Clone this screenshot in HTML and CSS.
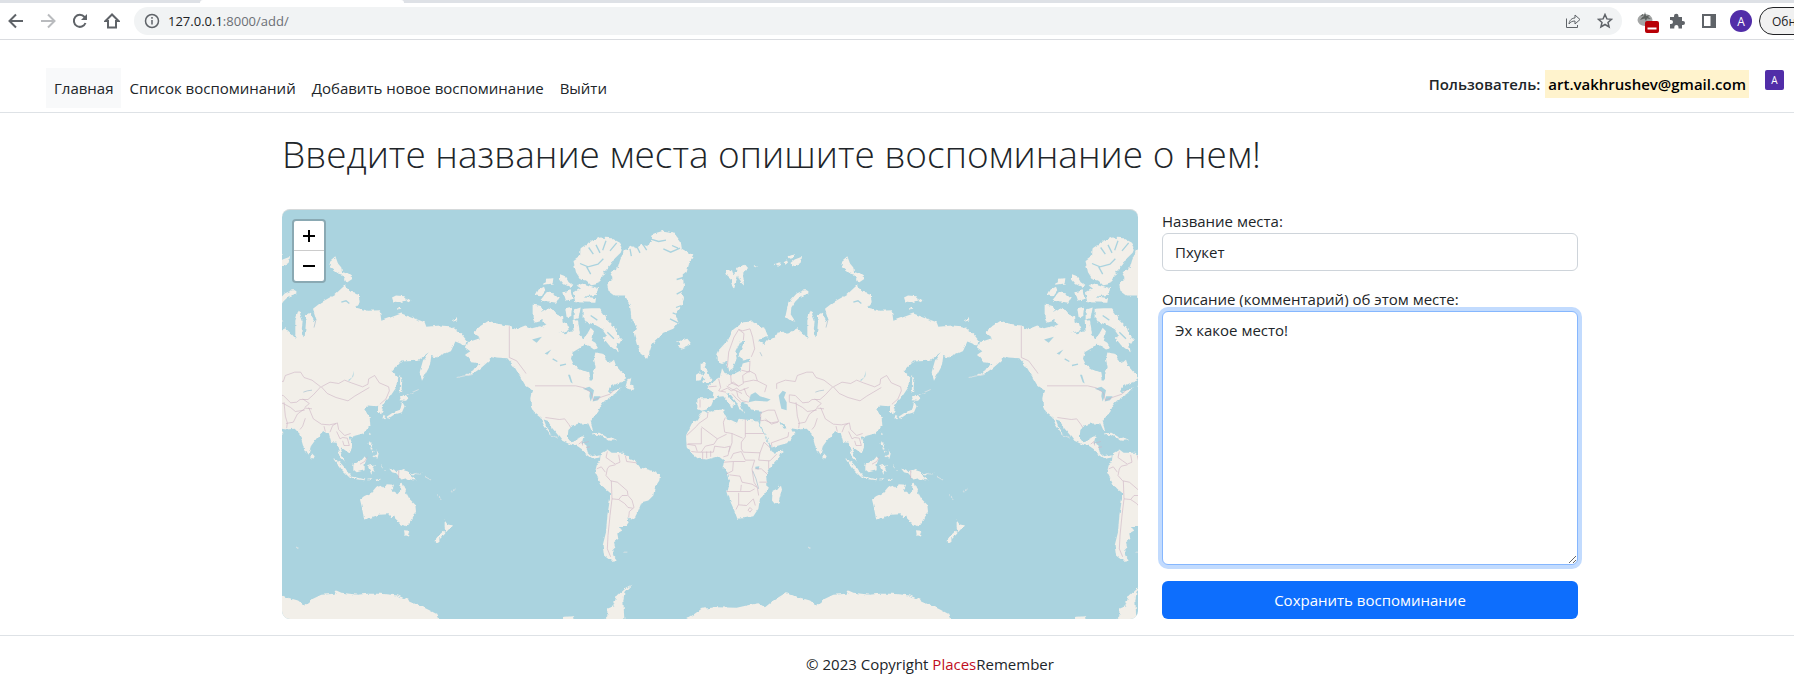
FILE: index.html
```html
<!DOCTYPE html>
<html lang="ru">
<head>
<meta charset="utf-8">
<title>PlacesRemember</title>
<link rel="stylesheet" href="styles.css">
</head>
<body>
<div class="browser">
  <div class="tabs"><div class="tab"></div></div>
  <div class="toolbar">
    <button class="tool" aria-label="Назад"><svg viewBox="0 0 16 16"><path d="M15 8H2M8 1.500 1.500 8 8 14.500"/></svg></button>
    <button class="tool tool-off" aria-label="Вперёд"><svg viewBox="0 0 16 16"><path d="M1 8h13M8 1.500 14.500 8 8 14.500"/></svg></button>
    <button class="tool" aria-label="Обновить"><svg viewBox="0 0 16 16"><path d="M13.500 10A6 6 0 1 1 12.500 4L14 5.500"/><path class="solid" d="M15 1v6H9z"/></svg></button>
    <button class="tool" aria-label="Домой"><svg viewBox="0 0 16 16"><path d="M8 1.500 1.500 8H4v6.500h8V8h2.500z"/></svg></button>
    <div class="omnibox">
      <svg class="info" viewBox="0 0 16 16"><circle cx="8" cy="8" r="6.500"/><path d="M8 7v4.500M8 4v1.700"/></svg>
      <span class="url">127.0.0.1<span class="path">:8000/add/</span></span>
      <button class="tool thin" aria-label="Поделиться"><svg viewBox="0 0 16 16"><path d="M1.500 5.500v9h11V12M4 11c.5-4 3-6 6-6V2l5 4.500L10 11V8c-3 0-4.500 1-6 3z"/></svg></button>
      <button class="tool star" aria-label="В закладки"><svg viewBox="0 0 16 16"><path d="m8 1.500 1.900 4.400 4.600.4-3.500 3.100 1.100 4.600L8 11.500 3.900 14 5 9.400 1.500 6.300l4.600-.4z"/></svg></button>
    </div>
    <div class="extensions">
      <button class="tool" aria-label="Расширение"><svg class="tomato" viewBox="0 0 22 22"><ellipse cx="8" cy="8" rx="7.500" ry="6" fill="#a3a5a5"/><path d="M3 5c1-1 2.500-1.500 4-1.500L5.500 2M7 4l1-4 1 4 4-1-2 2 3 2-4-.5L9 9 7.500 6.500 3 8l2-2.500z" fill="#5c605e"/><rect x="8" y="9" width="14" height="12" rx="2" fill="#b80006"/><path d="M10.500 16.500h9" stroke="#fff"/></svg></button>
      <button class="tool" aria-label="Расширения"><svg viewBox="0 0 16 16"><path class="solid" d="M1 4h4V3a2 2 0 0 1 4.500 0v1H13v4h1a2 2 0 0 1 0 4h-1v3.500H9.500V14a2 2 0 0 0-4.200 0v1.500H1V11h1a2 2 0 0 0 0-4H1z"/></svg></button>
      <button class="tool" aria-label="Боковая панель"><svg viewBox="0 0 16 16"><path d="M2 2h12v12H2z"/><path class="solid" d="M9.500 2H14v12H9.500z"/></svg></button>
      <button class="profile">A</button>
    </div>
    <button class="update">Обн</button>
  </div>
</div>

<header class="site-header">
  <nav class="nav">
    <a class="active" href="#">Главная</a>
    <a href="#">Список воспоминаний</a>
    <a href="#">Добавить новое воспоминание</a>
    <a href="#">Выйти</a>
  </nav>
  <div class="user"><span>Пользователь:</span><mark>art.vakhrushev@gmail.com</mark><span class="avatar">A</span></div>
</header>

<main class="main">
  <div class="container">
    <h1>Введите название места опишите воспоминание о нем!</h1>
    <div class="row">
      <section class="map" aria-label="Карта">
        <svg class="world" viewBox="-714 12 2568 1230" preserveAspectRatio="xMidYMid slice">
          <defs>
            <filter id="coast" x="-5%" y="-5%" width="110%" height="110%"><feTurbulence type="fractalNoise" baseFrequency="0.07" numOctaves="2" seed="4" result="n"/><feDisplacementMap in="SourceGraphic" in2="n" scale="11" xChannelSelector="R" yChannelSelector="G"/></filter>
            <g id="world">
              <g class="land" filter="url(#coast)">
                <!-- North America -->
                <path d="M-150 408l30-10-22-16 22-20 26-16 24 8 38 7 20 10 28-11 20 8 24-6 26 10 24 7 26 4 20-8 20 6 14 18 12-14 10-18 10 10-4 20-8 25-16-4-16 10-20 12-5 20 10 20 20 12 22 8 4 25h10v-20l8-20-5-24 4-20 22 4 10 16 14 10 10-8 6 18 14 16 16 14-2 14-26 10-22 12-4 14 38-12-14 16-18 10-18 12-12 16-5 16-15 17-8 12 6 20-3 8-10-22h-24l-26 5-10 15-2 20 12 16 15-4 6-12 15-2-6 22 14 8 4 18 14 12 22-6 0 10-20 4-22-16-10-12-14-10-20-4-26-12-10-14-20-24-14-22-12-4 8 20 16 24-6-2-18-26-10-22-20-16-8-16-2-26 5-24-22-18-14-24-18-30-20-24-32-2-14-4-10 15-22 20-24 16-26 10 2-4 28-18 14-18-25-3-5-13-12-10 15-10-20-14z"/>
                <path d="M38 298l20 2 12 12-8 8 20-12 20 6 10 14 14 6 2 14 14 8 4 18-24 6-26 4-16-10-14-12 10-6-8-12-26 8-4-18zM46 270l10-18 16-8 4 10-14 18zM72 238l8-18 20-2-2 16zM60 286l20-26 20 4 16 14-8 14-20-4zM120 206l16 6 10 18 14 10-12 4-16-8-12-14zM130 260l22-6 6 26-20 6zM160 262l20-12 50 4 2 14-40 4 36 6-2 14-60-2zM170 240l20-6 44 14-2 12-40-4zM136 308l20-4-2 24-14 8zM164 312l18-6-6 32-12 4zM158 346l16-2 6 40-18 6zM188 310L215 308L240 308L256 330L262 345L285 368L292 390L305 402L298 415L290 412L296 440L284 432L268 420L252 400L258 388L244 368L222 356L200 352L188 335zM196 414l14-12 16 10 10 16-14 4z"/>
                <path d="M160 164L180 150L182 128L212 108L240 96L275 98L300 112L308 126L302 142L285 158L272 178L256 196L246 212L232 236L214 240L200 226L182 222L168 200z"/>
                <path d="M316 546l6-22 12-4-4 14 14 12-4 8zM216 684l22-2 24 14-8 2-20-10-18 2zM256 700l20-4 16 8-22 2z"/>
                <!-- Greenland and Iceland -->
                <path d="M262 236L280 215L272 200L294 186L300 165L312 135L335 122L350 128L365 118L385 122L400 85L430 76L460 80L482 108L485 130L500 138L520 150L508 172L500 200L488 210L492 240L485 258L492 280L485 300L465 325L475 350L460 370L430 382L405 405L395 420L382 460L362 445L350 415L342 385L350 360L335 345L330 300L315 270L285 270L265 255z"/>
                <path d="M468 404L482 406L502 400L512 412L502 424L486 430L474 424L478 414z"/>
                <!-- South America -->
                <path d="M242 744L262 732L275 742L310 742L325 757L345 765L360 785L395 795L420 808L418 825L405 845L400 870L385 885L365 890L355 915L345 935L330 942L322 935L326 950L318 962L300 965L305 977L292 985L295 1000L282 1010L286 1025L277 1035L280 1050L292 1064L272 1066L252 1050L248 1020L258 980L262 930L270 880L270 862L245 840L225 800L230 780L240 765z"/>
                <!-- Scandinavia, Europe and Asia -->
                <path d="M592 446L600 430L625 402L640 372L670 350L695 348L735 370L745 395L718 398L716 406L732 416L745 402L765 396L775 378L790 376L800 385L832 368L850 385L862 398L862 345L872 315L884 345L880 385L890 395L894 350L890 330L905 322L920 350L925 342L915 310L940 290L980 268L1010 240L1026 258L1052 265L1055 290L1042 306L1080 316L1116 314L1120 346L1180 324L1250 350L1255 364L1296 360L1330 362L1360 385L1376 405L1372 420L1342 408L1330 435L1284 456L1270 450L1266 480L1242 526L1235 500L1245 465L1262 440L1230 466L1180 468L1150 500L1168 512L1165 545L1145 575L1124 598L1104 602L1080 600L1068 610L1085 635L1087 660L1065 684L1035 692L1025 694L1034 720L1025 744L1000 726L996 736L1012 772L996 756L986 712L970 710L962 682L942 680L925 700L910 720L902 748L885 720L875 685L860 670L835 672L800 666L776 642L792 670L810 665L824 686L805 712L755 726L742 700L720 655L726 616L690 612L682 596L660 590L664 604L672 624L660 614L650 592L634 570L618 560L622 572L644 596L634 608L628 594L610 572L596 574L580 584L574 600L560 612L545 616L532 610L532 578L578 578L580 560L562 550L566 542L585 525L600 516L606 488L616 506L640 506L662 495L668 474L690 468L690 460L668 466L656 446L672 415L672 406L662 408L646 440L650 458L638 492L628 498L620 464L608 476L594 470z"/>
                <!-- Africa -->
                <path d="M548 616L558 622L580 614L613 612L614 628L620 640L650 655L656 640L680 643L715 645L722 665L740 700L752 735L762 742L788 735L780 755L752 785L738 810L743 845L740 860L720 880L715 910L700 932L670 938L652 940L645 920L632 890L622 858L630 825L622 800L608 785L612 765L595 752L560 762L535 760L515 745L500 725L498 690L515 655L530 645z"/>
                <path d="M782 838L786 852L776 890L764 895L756 885L758 856L772 850z"/>
                <!-- British Isles, Svalbard, Arctic islands -->
                <path d="M542 474L558 472L554 486L562 492L568 512L576 522L572 532L546 534L556 520L548 512L552 500L542 492zM528 508l12-8 8 8-6 16-14 2zM616 196l20-2 4 12 14-18 10 6 6 22 2 24-10-10-8-20-6 18-6 24-6-12-4-22-10-8zM652 186l24-8 10 12-20 14zM704 182l10 0-6 4zM764 176l14-6 6 8-10 6zM790 168l10-6 4 10-8 6zM802 154l20-8 0 10-10 4zM812 172l12-10 22-8-4 18-16 6-12 6zM852 254L862 254L862 264L842 272L826 288L814 306L812 326L826 348L812 346L796 334L802 306L814 282L830 264zM964 184l4-20 14-12 8 22 10 12 2 14 18 6 16 12-20 14-14-24-12-4-18-14zM1152 276l12-6 26 2 4 14-20 4-18-2zM1196 280l14 4-4 6-10-4zM1170 302l10 4-8 6zM1332 344l14-6 2 6-12 4z"/>
                <!-- Japan, Philippines, Indonesia -->
                <path d="M1177 508l6 14-2 24 2 12-8 4zM1176 576l12-8 16 10-14 8-12-2zM1182 588l8 14-8 18-24 8-18 12-4-6 20-14 22-8zM1126 628l8 4-2 10-6-4zM1110 600l8-4 6 16-4 14-10-4zM1084 678l4 8-4 8zM1084 704l6 6 0 16 8 8-10-4-6-14zM1096 752l12-6-2-12 6 10-4 16zM1094 736l6 2-4 4zM978 758l16 10 18 20 14 22-4 4-18-18zM1022 812l26 4 24 6-2 2-44-6zM1036 778l20-12 12-14 8 8-6 16 0 18-24 6-10-8zM1080 784l6-4 16-4-8 10 6 14-6-4-4 12-4-12zM1076 824l18-4-6 4zM1106 822l14-2-12 8zM1122 778l2 12-4-6zM1128 794l12 0-10 2zM1144 790L1158 792L1166 800L1180 792L1200 798L1208 812L1226 824L1214 824L1196 818L1180 822L1166 804L1152 800zM1208 808l18-6-10 8zM912 744l8 8-4 8-6-4z"/>
                <!-- Australia and New Zealand -->
                <path d="M1056 882L1068 872L1090 862L1104 845L1122 840L1130 848L1136 836L1158 838L1152 856L1168 866L1176 858L1178 834L1184 832L1192 856L1204 880L1222 898L1224 918L1212 944L1198 962L1180 958L1168 950L1158 932L1150 938L1142 926L1112 928L1090 936L1068 942L1064 915zM1188 974l16 2-4 14-10-4zM1310 944L1318 956L1332 960L1322 972L1314 980L1310 968zM1308 976L1312 984L1298 998L1286 1010L1280 1004L1294 988z"/>
                <path class="islet" d="M1224 804q16 4 18-2M1248 812l22 12M1288 870l16 14M1328 860l14-8M90 686l24 12M310 1040h12M864 1022l8 6M-190 516q30-6 50-10M1196 568l36-16"/>
                <!-- Antarctica -->
                <path d="M122 1260l12-26 28-2 4 28M250 1260l-2-14 14-14 0-22 18-8 10-32 24-22 20-10-20 20-4 26 4 78M470 1260L490 1246L520 1228L545 1210L590 1205L650 1207L690 1198L715 1193L735 1205L760 1185L800 1160L835 1175L870 1185L890 1200L915 1180L940 1168L980 1165L985 1155L1000 1162L1050 1168L1080 1165L1120 1165L1170 1170L1210 1188L1260 1212L1290 1228L1298 1260z"/>
              </g>
              <!-- Inland water -->
              <g class="water">
                <path d="M686 590L692 568L706 560L720 572L752 582L742 588L706 586zM776 570L788 556L798 560L792 576L800 590L800 614L784 610L780 592zM1020 524l12-8 6-20-2 16-12 14zM36 402l30-8-16 18zM74 444l20-12-12 16zM144 508l6 0 8 26-6-4zM188 550l20-6 14 10-4 18-6 16-4-16 2-14zM222 572l20 0-8 12-16 4zM706 784l12-2-2 10-10-2z"/>
                <path class="stroke" d="M180 174l24 10 30-8 16-16M200 184l12 22M228 118l12 24M258 106l-10 28M206 126l14 20M290 112l-20 24M430 130l22 10 28-12M456 120l18 8M390 100l26 8 22-4M366 112l14 22M350 122l10 20M330 130l4 22M490 216l-20 6M488 256l-18 10M484 300l-16 6M478 330l-20-8M474 352l-24-12M98 460l14 8M120 480l18-4M1000 290l14-4 10 8M212 330l20 14M262 380l20 20"/>
                <path class="river" d="M698 796l10 24 8 30M924 342l-6 24M886 560l12-4 14-2M720 440l6 12"/>
              </g>
              <g class="borders">
                <path d="M-32 362V456L-10 466L14 498L18 504M45 541H167L193 547L214 562L220 584L246 574L270 566L284 552M76 636L118 642L134 640L146 656L152 666M176 716l10-8 2 12M192 712l14-4M198 726l12-2"/>
                <path d="M262 738L258 756L272 766L286 776L300 770L296 748M286 778L268 782L262 790L258 810L272 826L292 830L306 842L322 856L324 870L336 884L342 906L328 918L326 936M256 800L244 784L230 790M274 826L276 880L270 930L264 990L262 1030L272 1054M276 880L296 882L306 870L322 870M296 882L314 894L324 906L338 908M316 750L320 768L350 772"/>
                <path d="M564 620L562 636L536 654L530 662L500 690M544 664L592 700L620 686M544 668V715H504M592 700L582 716L556 722L544 740M616 636L610 650L614 680L636 684L668 698M676 640V694L664 710V730L670 740M636 684V712L626 740M676 684H732M500 716L526 720L532 738M548 740V762M560 738V758M572 736V754M514 738L532 740L580 740L584 722L614 726L630 722L624 750L610 754M632 760L640 744L664 738L676 764M670 740L720 742L732 710L752 728M720 742L716 764L750 766L770 746M676 764H704L696 790L702 830L712 846L716 870M640 768H676M746 766V790M706 790H724L742 806M718 830H742M612 770L640 768L638 796L618 806M628 808L660 812L666 830L696 836L712 846M620 858H690L704 850M656 862V896L648 912M656 898L680 900L700 880L706 900M684 914L690 906L696 912L690 920zM664 838L662 856"/>
                <path d="M622 486L626 440L642 395L656 372L668 376L690 370M690 370L698 395L704 430L694 454M656 372L672 384L670 404M664 494L688 500L690 466M632 508L634 532L656 542L670 534L668 510M668 510L688 496L706 506L712 526L740 540L734 560M596 520L602 546L596 556L618 560M566 544L590 542M540 582V606M604 556L622 548L634 556L650 548L660 556L686 546M620 542L638 552L654 558L666 564M636 564L650 580L662 590M650 556L654 574L666 586L686 590M672 548L680 568L690 576M670 530L700 524L712 526M624 540L640 530L656 542"/>
                <path d="M722 646V622L744 614L764 614L776 648L754 652L734 644zM736 640L754 656L774 650M782 702L754 712L756 724M782 702L804 694L806 680M770 550V534L796 524L826 528L832 510L860 500L878 500L888 516L912 524L938 544M808 568L826 570L848 592L866 590L876 582L900 582L916 568L938 544M808 568V590L826 594L848 606L862 618L890 614M828 590L832 632L838 652L836 668M834 654L856 650L868 626L892 608L912 610M884 580L904 594L890 606M940 544L966 530L992 534L1010 524L1030 532L1064 544L1080 536L1082 520L1100 510L1114 532L1142 544L1144 556L1134 580L1116 596M940 544L958 564L984 576L1020 586L1040 572L1084 546M902 606L916 640L940 656L964 658L984 654M892 638L884 662L876 672M948 662L952 678M966 680L974 660L988 652L992 672L1010 690L1028 684M986 678L996 700L1004 696L1018 698L1024 720H1008L1004 706M1056 776L1070 768L1078 754M1172 794V820"/>
              </g>
            </g>
          </defs>
          <use href="#world" x="-1536"/>
          <use href="#world"/>
          <use href="#world" x="1536"/>
        </svg>
        <div class="zoom">
          <button aria-label="Приблизить"><svg viewBox="0 0 12 12"><path d="M0 6h12M6 0v12"/></svg></button>
          <button aria-label="Отдалить"><svg viewBox="0 0 12 12"><path d="M0 6h12"/></svg></button>
        </div>
      </section>
      <form class="form">
        <div class="field">
          <label for="place">Название места:</label>
          <input id="place" type="text" value="Пхукет">
        </div>
        <div class="field grow">
          <label for="comment">Описание (комментарий) об этом месте:</label>
          <textarea id="comment">Эх какое место!</textarea>
        </div>
        <button class="save" type="button">Сохранить воспоминание</button>
      </form>
    </div>
  </div>
</main>

<footer class="footer">© 2023 Copyright <span>Places</span>Remember</footer>
</body>
</html>
```
FILE: styles.css
```css
* { box-sizing: border-box; }
body {
  margin: 0;
  background: #fff;
  color: #212529;
  font: 16px/24px "Open Sans", "Noto Sans", sans-serif;
  overflow-x: hidden;
}
button { font-family: inherit; border: 0; padding: 0; background: none; }

/* Browser bar */
.browser { border-bottom: 1px solid #dadce0; }
.tabs { height: 3px; background: #dee1e6; padding-left: 200px; }
.tab { width: 204px; height: 3px; background: #fff; border-radius: 3px 3px 0 0; }
.toolbar { display: flex; align-items: center; height: 36px; overflow: hidden; }
.tool { flex: none; width: 32px; height: 28px; display: flex; align-items: center; justify-content: center; color: #5f6368; }
.tool svg, .info { width: 16px; height: 16px; fill: none; stroke: currentColor; stroke-width: 2; }
.tool .solid { fill: currentColor; stroke: none; }
.tool-off { color: #b9bbbe; }
.tool.thin svg { stroke-width: 1; }
.tool.star svg { stroke-width: 1.5; }
.omnibox { flex: 1; display: flex; align-items: center; height: 28px; margin-left: 6px; padding: 0 1px 0 10px; border-radius: 14px; background: #f1f3f4; color: #5f6368; }
.omnibox .info { stroke-width: 1.5; margin-right: 8px; flex: none; }
.url { flex: 1; font-size: 13px; color: #202124; }
.path { color: #6b6f74; }
.extensions { display: flex; align-items: center; padding-left: 7px; }
.tool .tomato { width: 22px; height: 22px; margin: 4px 0 0 6px; stroke: none; }
.profile { width: 22px; height: 22px; margin: 0 7px 0 5px; border-radius: 50%; background: #512da8; color: #fff; font-size: 12px; }
.update { flex: none; width: 90px; height: 28px; margin-right: -55px; padding-left: 12px; border: 1px solid #202124; border-radius: 14px; background: #f1f1f1; font-size: 12px; text-align: left; color: #202124; }

/* Site header */
.site-header { display: flex; justify-content: space-between; align-items: flex-start; padding: 28px 10px 4px 46px; border-bottom: 1px solid #dee2e6; }
.nav { display: flex; }
.nav a { padding: 8px; color: #212529; text-decoration: none; font-size: 15px; }
.nav .active { background: #f8f9fa; }
.user { display: flex; align-items: flex-start; padding-top: 2px; font-size: 15px; font-weight: 600; }
.user mark { margin-left: 5px; padding: 2px 3px; background: #fff3cd; color: #000; }
.user > span:first-child { padding-top: 2px; }
.user .avatar { width: 19px; height: 20px; margin-left: 16px; border-radius: 2px; background: #512da8; color: #fff; font-size: 10px; line-height: 20px; font-weight: 400; text-align: center; }

/* Page content */
.main, .footer { padding-left: 66px; }
.container { max-width: 1296px; margin: 0 auto; padding: 17px 0 16px; }
h1 { margin: 0 0 31px; font-size: 37px; line-height: 48px; font-weight: 300; }
.row { display: grid; grid-template-columns: minmax(0, 856fr) minmax(0, 416fr); gap: 24px; }
.map { position: relative; overflow: hidden; min-height: 410px; border-radius: 8px; background: #aad3df; border-top: 1px solid #d5d9da; }
.world { position: absolute; inset: 0; width: 100%; height: 100%; }
.land { fill: #f2efe9; }
.islet { fill: none; stroke: #d6e1e4; stroke-width: 3; }
.water { fill: #aad3df; }
.stroke { fill: none; stroke: #aad3df; stroke-width: 4; }
.river { fill: none; stroke: #a5bfd0; stroke-width: 2; }
.borders { fill: none; stroke: #cdb4c4; stroke-width: 2; opacity: .9; }
.zoom { position: absolute; top: 9px; left: 10px; width: 34px; border: 2px solid #8aa9b3; border-radius: 4px; overflow: hidden; background: #fff; }
.zoom button { display: flex; align-items: center; justify-content: center; width: 30px; height: 30px; }
.zoom button:first-child { border-bottom: 1px solid #ccc; }
.zoom svg { width: 12px; height: 12px; stroke: #000; stroke-width: 2; }

.form { display: flex; flex-direction: column; gap: 16px; font-size: 15px; }
.field { display: flex; flex-direction: column; }
.grow { flex: 1; }
input, textarea { width: 100%; padding: 6px 12px; border: 1px solid #ced4da; border-radius: 6px; background: #fff; color: #212529; font: inherit; line-height: 24px; }
input { height: 38px; }
textarea { flex: 1; min-height: 254px; border-color: #86b7fe; box-shadow: 0 0 0 4px #c2dbfe; resize: vertical; }
.save { height: 38px; border-radius: 6px; background: #0d6efd; color: #fff; font-size: 15px; }

.footer { padding-top: 16px; padding-bottom: 8px; border-top: 1px solid #dee2e6; text-align: center; line-height: 24px; font-size: 15px; }
.footer span { color: #c00d1e; }
```
